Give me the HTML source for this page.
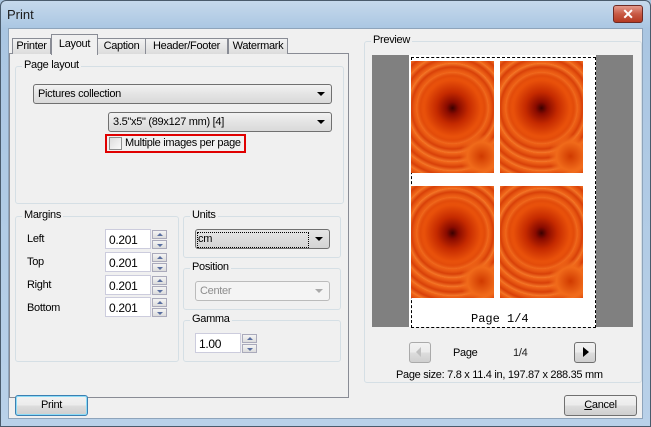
<!DOCTYPE html>
<html><head><style>
*{box-sizing:border-box;margin:0;padding:0}
body{width:651px;height:427px;overflow:hidden;font-family:"Liberation Sans",sans-serif;font-size:11px;letter-spacing:-0.3px;color:#000;position:relative;background:#a9c4de}
.a{position:absolute}
.win{left:0;top:0;width:651px;height:427px;border:1px solid #4a5b6c;border-radius:6px 6px 0 0;background:linear-gradient(#c6d9ec,#aac6e2 28px,#b9d1e9)}
.client{left:8px;top:28px;width:635px;height:391px;background:#f0f0f0;border:1px solid #8ea4bb}
.grp{position:absolute;border:1px solid #d5dfe5;border-radius:3px}
.grp>span{position:absolute;top:-8px;left:6px;background:#f0f0f0;padding:0 2px;font-size:11px}
.combo{position:absolute;border:1px solid #707070;border-radius:3px;background:linear-gradient(#f2f2f2,#e4e4e4 50%,#d9d9d9);padding:3px 4px;height:20px}
.combo:after{content:"";position:absolute;right:6px;top:7px;border:4px solid transparent;border-top:4px solid #000;border-bottom:0}
.combo.dis:after{border-top-color:#aaa}
.inp{position:absolute;border:1px solid #ccd;background:#fff;height:20px;width:46px;padding:3px 3px;font-size:12px}
.spin{position:absolute;width:15px;height:20px}
.spin div{height:9px;border:1px solid #aab;background:linear-gradient(#f4f4f4,#dcdcdc);margin-bottom:1px;position:relative}
.spin div:after{content:"";position:absolute;left:4px;top:2px;border:3px solid transparent}
.spin .u:after{border-bottom:3px solid #5a6fa0;border-top:0}
.spin .d:after{border-top:3px solid #5a6fa0;border-bottom:0;top:3px}
.btn{position:absolute;border:1px solid #707070;border-radius:3px;background:linear-gradient(#f2f2f2,#ebebeb 50%,#dddddd 51%,#cfcfcf);text-align:center;padding-top:3px;font-size:11px}
.tab{position:absolute;top:38px;height:16px;border:1px solid #898c95;border-bottom:0;background:linear-gradient(#f2f2f2,#dcdcdc);padding-top:1px;text-align:center;font-size:11px;white-space:nowrap;overflow:hidden}
.fl{position:absolute;width:83px;height:112px;background:
radial-gradient(circle at 50% 42%,#3a0000 0,#8a0b00 6px,#c52a00 16px,#e8500a 28px,transparent 40px),
radial-gradient(circle at 85% 85%,#d03a00 0,#f06a1a 14px,transparent 22px),
repeating-radial-gradient(circle at 50% 42%,#f26a1c 0,#d84008 5px,#f57a2a 9px),#e85a12}
</style></head><body>
<div class="a win"></div>
<div class="a" style="left:7px;top:7px;font-size:13px;color:#1b1b1b;letter-spacing:0">Print</div>
<div class="a" style="left:613px;top:5px;width:30px;height:18px;border:1px solid #6d2a24;border-radius:3px;background:linear-gradient(#e49a8c,#c85a45 50%,#b53a22);color:#fff;font-weight:bold;text-align:center;font-size:14px;line-height:16px">✕</div>
<div class="a client"></div>
<div class="a" style="left:9px;top:53px;width:340px;height:345px;border:1px solid #898c95;background:#fff"></div>
<div class="a" style="left:10px;top:54px;width:338px;height:343px;background:#f0f0f0"></div>
<div class="tab" style="left:12px;width:39px">Printer</div>
<div class="tab" style="left:97px;width:49px">Caption</div>
<div class="tab" style="left:145px;width:83px">Header/Footer</div>
<div class="tab" style="left:228px;width:60px">Watermark</div>
<div class="tab" style="left:51px;top:34px;height:21px;width:47px;background:#f0f0f0;padding-top:3px">Layout</div>

<div class="grp" style="left:15px;top:66px;width:329px;height:138px"><span>Page layout</span></div>
<div class="combo" style="left:33px;top:84px;width:299px">Pictures collection</div>
<div class="combo" style="left:108px;top:112px;width:224px">3.5"x5" (89x127 mm) [4]</div>
<div class="a" style="left:105px;top:134px;width:141px;height:19px;border:2px solid #e00000"></div>
<div class="a" style="left:109px;top:137px;width:13px;height:13px;border:1px solid #8e8f8f;background:linear-gradient(135deg,#dcdcdc,#fafafa)"></div>
<div class="a" style="left:125px;top:137px;font-size:11px">Multiple images per page</div>

<div class="grp" style="left:15px;top:216px;width:164px;height:146px"><span>Margins</span></div>
<div class="a" style="left:27px;top:233px">Left</div>
<div class="a" style="left:27px;top:256px">Top</div>
<div class="a" style="left:27px;top:279px">Right</div>
<div class="a" style="left:27px;top:302px">Bottom</div>
<div class="inp" style="left:105px;top:229px">0.201</div>
<div class="inp" style="left:105px;top:252px">0.201</div>
<div class="inp" style="left:105px;top:275px">0.201</div>
<div class="inp" style="left:105px;top:297px">0.201</div>
<div class="spin" style="left:152px;top:230px"><div class="u"></div><div class="d"></div></div>
<div class="spin" style="left:152px;top:253px"><div class="u"></div><div class="d"></div></div>
<div class="spin" style="left:152px;top:276px"><div class="u"></div><div class="d"></div></div>
<div class="spin" style="left:152px;top:298px"><div class="u"></div><div class="d"></div></div>

<div class="grp" style="left:183px;top:216px;width:158px;height:42px"><span>Units</span></div>
<div class="combo" style="left:195px;top:229px;width:135px;background:linear-gradient(#e6e6e6,#d4d4d4)"><span style="outline:1px dotted #000;display:inline-block;width:110px;height:14px;margin:-1px 0 0 -2px">cm</span></div>
<div class="grp" style="left:183px;top:268px;width:158px;height:42px"><span>Position</span></div>
<div class="combo dis" style="left:195px;top:281px;width:135px;border-color:#bbb;background:#f4f4f4;color:#8d8d8d">Center</div>
<div class="grp" style="left:183px;top:320px;width:158px;height:42px"><span>Gamma</span></div>
<div class="inp" style="left:195px;top:333px">1.00</div>
<div class="spin" style="left:242px;top:334px"><div class="u"></div><div class="d"></div></div>

<div class="btn" style="left:15px;top:395px;width:73px;height:21px;border-color:#3c7fb1;box-shadow:inset 0 0 0 1px #8ddcf7">Print</div>
<div class="btn" style="left:564px;top:395px;width:73px;height:21px"><u>C</u>ancel</div>

<div class="grp" style="left:364px;top:41px;width:278px;height:342px"><span>Preview</span></div>
<div class="a" style="left:372px;top:55px;width:261px;height:272px;background:#808080"></div>
<div class="a" style="left:409px;top:55px;width:187px;height:272px;background:#fff"></div>
<div class="a" style="left:411px;top:57px;width:185px;height:271px;border:1px dashed #000"></div>
<div class="fl" style="left:411px;top:61px"></div>
<div class="fl" style="left:500px;top:61px"></div>
<div class="fl" style="left:411px;top:186px"></div>
<div class="fl" style="left:500px;top:186px"></div>
<div class="a" style="left:471px;top:312px;font-family:'Liberation Mono',monospace;font-size:12px;letter-spacing:0">Page 1/4</div>
<div class="btn" style="left:409px;top:342px;width:22px;height:21px;border-color:#aaa"></div>
<div class="a" style="left:416px;top:347px;border:5px solid transparent;border-right:5px solid #c0c0c0;border-left:0"></div>
<div class="btn" style="left:574px;top:342px;width:22px;height:21px"></div>
<div class="a" style="left:583px;top:347px;border:5px solid transparent;border-left:6px solid #000;border-right:0"></div>
<div class="a" style="left:453px;top:347px">Page</div>
<div class="a" style="left:513px;top:347px;color:#222">1/4</div>
<div class="a" style="left:396px;top:369px">Page size: 7.8 x 11.4 in, 197.87 x 288.35 mm</div>
</body></html>
